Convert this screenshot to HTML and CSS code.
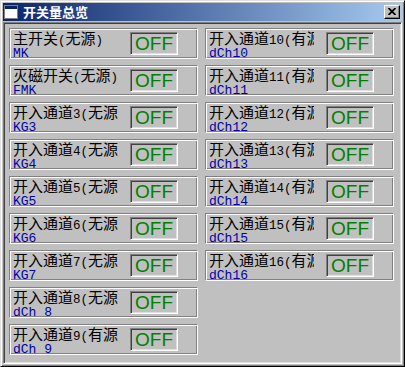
FILE: index.html
```html
<!DOCTYPE html>
<html lang="zh">
<head>
<meta charset="utf-8">
<link rel="stylesheet" href="styles.css">
</head>
<body>
<div class="window">
  <div class="titlebar">
    <svg class="ticon" width="14" height="14" viewBox="0 0 14 14"><rect x="0.5" y="0.5" width="13" height="13" fill="#fff" stroke="#808080"/><rect x="1" y="1" width="12" height="3" fill="#0a246a"/></svg>
    <span class="ttext">开关量总览</span>
    <div class="close"><svg width="8" height="7" viewBox="0 0 8 7"><path d="M0.5 0 L7.5 7 M7.5 0 L0.5 7" stroke="#000" stroke-width="1.8"/></svg></div>
  </div>
  <div class="client">
    <div class="grid">
      <div class="cell"><div class="lbl"><div class="name">主开关<span class="h">(</span>无源<span class="h">)</span></div><div class="code">MK</div></div><div class="state">OFF</div></div>
      <div class="cell"><div class="lbl"><div class="name">灭磁开关<span class="h">(</span>无源<span class="h">)</span></div><div class="code">FMK</div></div><div class="state">OFF</div></div>
      <div class="cell"><div class="lbl"><div class="name">开入通道<span class="h">3(</span>无源<span class="h">)</span></div><div class="code">KG3</div></div><div class="state">OFF</div></div>
      <div class="cell"><div class="lbl"><div class="name">开入通道<span class="h">4(</span>无源<span class="h">)</span></div><div class="code">KG4</div></div><div class="state">OFF</div></div>
      <div class="cell"><div class="lbl"><div class="name">开入通道<span class="h">5(</span>无源<span class="h">)</span></div><div class="code">KG5</div></div><div class="state">OFF</div></div>
      <div class="cell"><div class="lbl"><div class="name">开入通道<span class="h">6(</span>无源<span class="h">)</span></div><div class="code">KG6</div></div><div class="state">OFF</div></div>
      <div class="cell"><div class="lbl"><div class="name">开入通道<span class="h">7(</span>无源<span class="h">)</span></div><div class="code">KG7</div></div><div class="state">OFF</div></div>
      <div class="cell"><div class="lbl"><div class="name">开入通道<span class="h">8(</span>无源<span class="h">)</span></div><div class="code">dCh 8</div></div><div class="state">OFF</div></div>
      <div class="cell"><div class="lbl"><div class="name">开入通道<span class="h">9(</span>有源<span class="h">)</span></div><div class="code">dCh 9</div></div><div class="state">OFF</div></div>
      <div class="cell"><div class="lbl"><div class="name">开入通道<span class="h">10(</span>有源<span class="h">)</span></div><div class="code">dCh10</div></div><div class="state">OFF</div></div>
      <div class="cell"><div class="lbl"><div class="name">开入通道<span class="h">11(</span>有源<span class="h">)</span></div><div class="code">dCh11</div></div><div class="state">OFF</div></div>
      <div class="cell"><div class="lbl"><div class="name">开入通道<span class="h">12(</span>有源<span class="h">)</span></div><div class="code">dCh12</div></div><div class="state">OFF</div></div>
      <div class="cell"><div class="lbl"><div class="name">开入通道<span class="h">13(</span>有源<span class="h">)</span></div><div class="code">dCh13</div></div><div class="state">OFF</div></div>
      <div class="cell"><div class="lbl"><div class="name">开入通道<span class="h">14(</span>有源<span class="h">)</span></div><div class="code">dCh14</div></div><div class="state">OFF</div></div>
      <div class="cell"><div class="lbl"><div class="name">开入通道<span class="h">15(</span>有源<span class="h">)</span></div><div class="code">dCh15</div></div><div class="state">OFF</div></div>
      <div class="cell"><div class="lbl"><div class="name">开入通道<span class="h">16(</span>有源<span class="h">)</span></div><div class="code">dCh16</div></div><div class="state">OFF</div></div>
    </div>
  </div>
</div>
</body>
</html>
```

FILE: styles.css
```css
html, body {
  margin: 0;
  padding: 0;
  background: #c0c0c0;
}

.window {
  box-sizing: border-box;
  width: 405px;
  height: 367px;
  background: #c0c0c0;
  border: 1px solid;
  border-color: #dfdfdf #000 #000 #dfdfdf;
  box-shadow: inset 1px 1px 0 #fff, inset -1px -1px 0 #808080;
  padding: 2px;
  display: flex;
  flex-direction: column;
  gap: 1px;
}

.titlebar {
  height: 18px;
  flex: none;
  display: flex;
  align-items: center;
  padding: 0 2px 0 1px;
  background: linear-gradient(to right, #0a246a, #a6caf0);
}

.ticon {
  display: block;
  flex: none;
}

.ttext {
  margin-left: 5px;
  color: #fff;
  font: bold 13px/18px "Noto Sans CJK SC", sans-serif;
}

.close {
  margin-left: auto;
  box-sizing: border-box;
  width: 16px;
  height: 14px;
  background: #c0c0c0;
  border: 1px solid;
  border-color: #fff #000 #000 #fff;
  box-shadow: inset -1px -1px 0 #808080;
  display: flex;
  align-items: center;
  justify-content: center;
  padding: 0 1px 1px 0;
}

.close svg {
  display: block;
}

.client {
  flex: 1;
  box-sizing: border-box;
  border: 1px solid;
  border-color: #808080 #fff #fff #808080;
  box-shadow: inset 1px 1px 0 #404040, inset -1px -1px 0 #dfdfdf;
  padding: 5px;
}

.grid {
  display: grid;
  grid-template-columns: 189px 189px;
  grid-template-rows: repeat(9, 31px);
  grid-auto-flow: column;
  column-gap: 7px;
  row-gap: 6px;
}

.cell {
  box-sizing: border-box;
  display: flex;
  align-items: flex-start;
  border: 1px solid;
  border-color: #808080 #fff #fff #808080;
  box-shadow: inset 1px 1px 0 #fff, inset -1px -1px 0 #808080;
  padding-left: 3px;
}

.lbl {
  width: 105px;
  flex: none;
  overflow: hidden;
  margin-top: 2px;
  margin-right: 2px;
}

.name {
  white-space: nowrap;
  color: #000;
  font: 15px/14px "Noto Sans CJK SC", sans-serif;
}

.h {
  font-family: "Liberation Mono", monospace;
  font-size: 12.5px;
}

.code {
  white-space: pre;
  color: #0000a8;
  font: 13px/12px "Liberation Mono", monospace;
}

.state {
  flex: none;
  box-sizing: border-box;
  width: 48px;
  height: 23px;
  margin-top: 3px;
  margin-left: 10px;
  border: 1px solid;
  border-color: #808080 #fff #fff #808080;
  box-shadow: inset 1px 1px 0 #404040, inset -1px -1px 0 #dfdfdf;
  color: #008000;
  font: 19px/21px "Liberation Sans", Arial, sans-serif;
  text-align: center;
}
```
